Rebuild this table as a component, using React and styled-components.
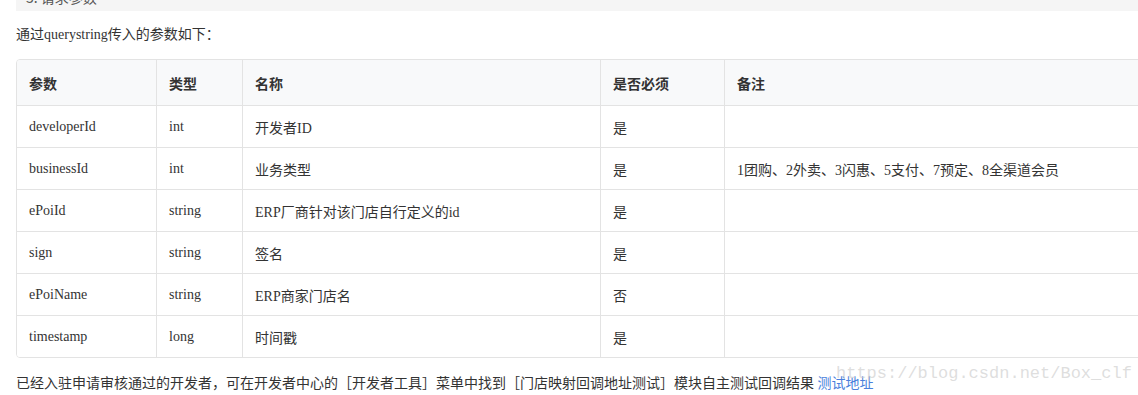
import React from "react";
import styled, { createGlobalStyle } from "styled-components";

const Global = createGlobalStyle`
  html, body { margin: 0; padding: 0; background: #fff; overflow: hidden; }
  body {
    font-family: "Liberation Serif", "Noto Sans CJK SC", serif;
    font-size: 14px;
    color: #333;
  }
`;

const Page = styled.div`
  position: relative;
  width: 1138px;
  height: 395px;
  overflow: hidden;
  padding-left: 16px;
  box-sizing: border-box;
`;

const SectionBar = styled.div`
  height: 11px;
  background: #f5f5f5;
  overflow: hidden;
  margin-right: -20px;
`;

const SectionTitle = styled.div`
  margin-top: -13px;
  padding-left: 10px;
  line-height: 20px;
  font-size: 14px;
  color: #555;
  font-family: "Noto Sans CJK SC", sans-serif;
`;

const Para = styled.p`
  margin: ${(p) => p.$mt || 0}px 0 0 0;
  line-height: 20px;
  font-size: 14px;
  white-space: nowrap;
`;

const Link = styled.a`
  color: #4a7fdc;
  text-decoration: none;
  font-family: "Noto Sans CJK SC", sans-serif;
`;

const TableBox = styled.div`
  margin-top: 14px;
  width: 1140px;
  border: 1px solid #e3e3e3;
  border-radius: 4px;
  overflow: hidden;
`;

const Row = styled.div`
  display: grid;
  grid-template-columns: 139px 86px 358px 124px 1fr;
  height: ${(p) => (p.$head ? 45 : 41)}px;
  background: ${(p) => (p.$head ? "#f8f9fa" : "#fff")};
  & + & { border-top: 1px solid #e3e3e3; }
`;

const Cell = styled.div`
  display: flex;
  align-items: center;
  padding: 0 12px;
  white-space: nowrap;
  font-weight: ${(p) => (p.$head ? 700 : 400)};
  font-family: ${(p) =>
    p.$head ? '"Noto Sans CJK SC", sans-serif' : '"Liberation Serif", "Noto Sans CJK SC", serif'};
  & + & { border-left: 1px solid #e3e3e3; }
`;

const Watermark = styled.div`
  position: absolute;
  left: 836px;
  top: 364px;
  font-family: "Liberation Mono", monospace;
  font-size: 17px;
  line-height: 20px;
  color: rgba(200, 200, 200, 0.6);
  pointer-events: none;
  white-space: nowrap;
`;

const headers = ["参数", "类型", "名称", "是否必须", "备注"];
const rows = [
  ["developerId", "int", "开发者ID", "是", ""],
  ["businessId", "int", "业务类型", "是", "1团购、2外卖、3闪惠、5支付、7预定、8全渠道会员"],
  ["ePoiId", "string", "ERP厂商针对该门店自行定义的id", "是", ""],
  ["sign", "string", "签名", "是", ""],
  ["ePoiName", "string", "ERP商家门店名", "否", ""],
  ["timestamp", "long", "时间戳", "是", ""],
];

export default function App() {
  return (
    <Page>
      <Global />
      <SectionBar>
        <SectionTitle>3. 请求参数</SectionTitle>
      </SectionBar>
      <Para $mt={14}>通过querystring传入的参数如下：</Para>
      <TableBox>
        <Row $head>
          {headers.map((h) => (
            <Cell $head key={h}>{h}</Cell>
          ))}
        </Row>
        {rows.map((r) => (
          <Row key={r[0]}>
            {r.map((c, i) => (
              <Cell key={i}>{c}</Cell>
            ))}
          </Row>
        ))}
      </TableBox>
      <Para $mt={14}>
        已经入驻申请审核通过的开发者，可在开发者中心的［开发者工具］菜单中找到［门店映射回调地址测试］模块自主测试回调结果 <Link href="#">测试地址</Link>
      </Para>
      <Watermark>https://blog.csdn.net/Box_clf</Watermark>
    </Page>
  );
}
